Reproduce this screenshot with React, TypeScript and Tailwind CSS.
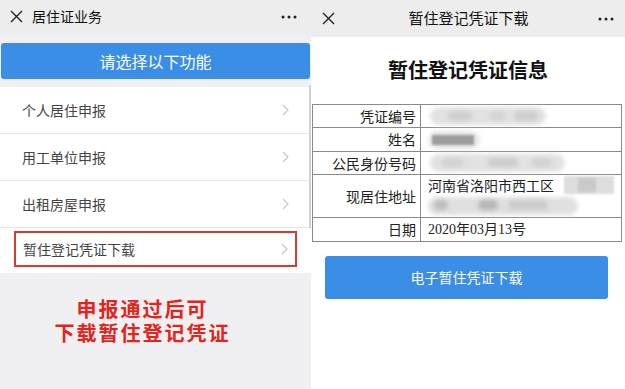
import React from "react";

const font = { fontFamily: '"Noto Sans CJK SC", "Noto Sans", sans-serif' };

const XIcon = () => (
  <svg width="13" height="13" viewBox="0 0 13 13" className="shrink-0">
    <path d="M1 1 L12 12 M12 1 L1 12" stroke="#222" strokeWidth="1.4" />
  </svg>
);

const Dots = () => (
  <svg width="16" height="4" viewBox="0 0 16 4">
    <circle cx="2" cy="2" r="1.5" fill="#222" />
    <circle cx="8" cy="2" r="1.5" fill="#222" />
    <circle cx="14" cy="2" r="1.5" fill="#222" />
  </svg>
);

const Chevron = () => (
  <svg width="7" height="12" viewBox="0 0 7 12">
    <path d="M1 1 L6 6 L1 11" stroke="#c6c6c6" strokeWidth="1.2" fill="none" />
  </svg>
);

const Blur = ({ className }: { className: string }) => (
  <div className={`absolute rounded-full blur-[2px] ${className}`} />
);

const LeftPanel = () => {
  const rows = ["个人居住申报", "用工单位申报", "出租房屋申报"];

  return (
    <div className="relative w-[311px] h-full flex flex-col bg-[#f0f0f2]">
      <div className="h-[33px] bg-[#ededed] flex items-center pl-[10px] pr-[14px]">
        <XIcon />
        <span className="ml-[9px] text-[14px] text-[#111]">居住证业务</span>
        <div className="ml-auto">
          <Dots />
        </div>
      </div>

      <div className="pt-[10px] pb-[8px] px-[1px]">
        <div className="h-[36px] rounded-[3px] bg-[#3a8ee6] flex items-center justify-center text-white text-[16px]">
          请选择以下功能
        </div>
      </div>

      <div className="bg-white">
        {rows.map((r) => (
          <div
            key={r}
            className="h-[47px] border-b border-[#e6e6e6] flex items-center pl-[22px] pr-[22px]"
          >
            <span className="text-[14px] text-[#444]">{r}</span>
            <div className="ml-auto">
              <Chevron />
            </div>
          </div>
        ))}
        <div className="h-[45px] pt-[3px] px-[14px]">
          <div className="h-[36px] border-2 border-[#d63a30] flex items-center pl-[7px] pr-[7px]">
            <span className="text-[14px] text-[#444]">暂住登记凭证下载</span>
            <div className="ml-auto">
              <Chevron />
            </div>
          </div>
        </div>
      </div>

      <div className="flex-1 flex flex-col items-center pt-[24px] pr-[26px] text-[20px] leading-[24px] tracking-[2px] font-bold text-[#e4231b]">
        <span>申报通过后可</span>
        <span>下载暂住登记凭证</span>
      </div>

      <div className="absolute right-0 top-[85px] w-[2px] h-[143px] bg-[#d2d2d2]" />
    </div>
  );
};

const RightPanel = () => {
  const label = "border border-[#8a8a8a] text-right pr-[4px] text-[14px] text-[#222] align-middle";
  const value = "border border-[#8a8a8a] pl-[7px] text-[14px] text-[#222] align-middle";

  return (
    <div className="flex-1 h-full flex flex-col bg-white">
      <div className="h-[37px] bg-[#ededed] flex items-center pl-[11px] pr-[11px]">
        <XIcon />
        <span className="flex-1 text-center text-[15px] text-[#111] pl-[4px]">暂住登记凭证下载</span>
        <Dots />
      </div>

      <div className="h-[67px] flex items-center justify-center text-[20px] font-bold text-[#111] pb-[2px]">
        暂住登记凭证信息
      </div>

      <table className="ml-[1px] w-[310px] border-collapse">
        <tbody>
          <tr className="h-[23px]">
            <td className={`${label} w-[108px]`}>凭证编号</td>
            <td className={value}>
              <div className="relative h-[22px]">
                <Blur className="left-[2px] top-[2px] w-[116px] h-[18px] bg-[#e2e2e2]" />
                <Blur className="left-[20px] top-[6px] w-[24px] h-[10px] bg-[#cfcfcf]" />
                <Blur className="left-[62px] top-[6px] w-[16px] h-[10px] bg-[#d4d4d4]" />
                <Blur className="left-[86px] top-[6px] w-[24px] h-[10px] bg-[#cdcdcd]" />
              </div>
            </td>
          </tr>
          <tr className="h-[24px]">
            <td className={label}>姓名</td>
            <td className={value}>
              <div className="relative h-[22px]">
                <Blur className="left-[0px] top-[2px] w-[52px] h-[18px] bg-[#e6e6e6]" />
                <div className="absolute left-[4px] top-[6px] w-[42px] h-[10px] bg-[#9d9d9d] blur-[1px]" />
              </div>
            </td>
          </tr>
          <tr className="h-[23px]">
            <td className={label}>公民身份号码</td>
            <td className={value}>
              <div className="relative h-[22px]">
                <Blur className="left-[2px] top-[2px] w-[135px] h-[18px] bg-[#e2e2e2]" />
                <Blur className="left-[14px] top-[6px] w-[22px] h-[9px] bg-[#d2d2d2]" />
                <Blur className="left-[60px] top-[6px] w-[30px] h-[9px] bg-[#cdcdcd]" />
                <Blur className="left-[104px] top-[6px] w-[20px] h-[9px] bg-[#d2d2d2]" />
              </div>
            </td>
          </tr>
          <tr className="h-[43px]">
            <td className={label}>现居住地址</td>
            <td className={`${value} align-top`}>
              <div className="relative h-[42px]">
                <span className="absolute left-0 top-[1px] leading-[18px]">河南省洛阳市西工区</span>
                <div className="absolute left-[136px] top-[1px] w-[50px] h-[18px] bg-[#dedede] blur-[1px]" />
                <div className="absolute left-[150px] top-[3px] w-[18px] h-[14px] bg-[#cacaca] blur-[1px]" />
                <Blur className="left-[0px] top-[22px] w-[150px] h-[18px] bg-[#e0e0e0]" />
                <Blur className="left-[6px] top-[25px] w-[14px] h-[10px] bg-[#bdbdbd]" />
                <Blur className="left-[50px] top-[25px] w-[20px] h-[10px] bg-[#b6b6b6]" />
                <Blur className="left-[80px] top-[25px] w-[40px] h-[10px] bg-[#cccccc]" />
              </div>
            </td>
          </tr>
          <tr className="h-[24px]">
            <td className={label}>日期</td>
            <td
              className={`${value} text-[13px]`}
              style={{ fontFamily: '"Liberation Serif", "Noto Sans CJK SC", serif' }}
            >
              2020年03月13号
            </td>
          </tr>
        </tbody>
      </table>

      <div className="pt-[14px] pl-[14px] pr-[17px]">
        <div className="h-[43px] rounded-[3px] bg-[#3a8ee6] flex items-center justify-center text-white text-[14px]">
          电子暂住凭证下载
        </div>
      </div>
    </div>
  );
};

export default function App() {
  return (
    <div className="w-[625px] h-[389px] flex overflow-hidden bg-white" style={font}>
      <LeftPanel />
      <RightPanel />
    </div>
  );
}
